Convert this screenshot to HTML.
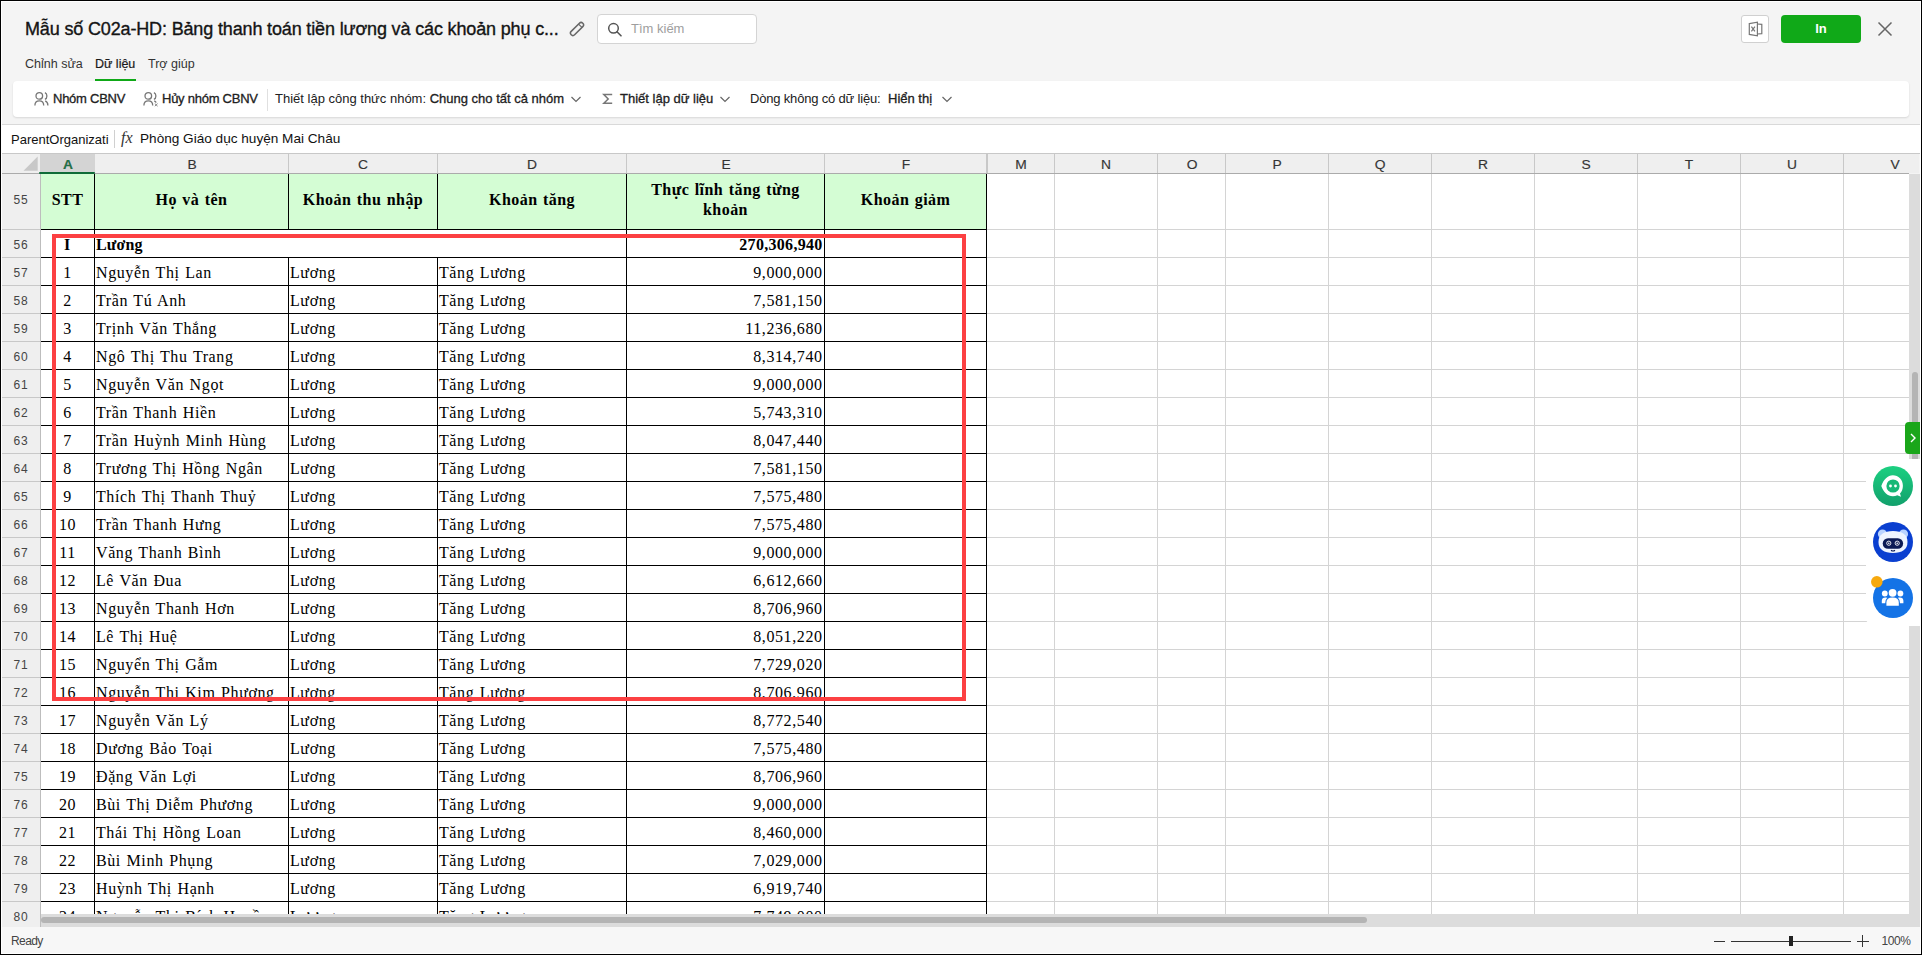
<!DOCTYPE html>
<html><head><meta charset="utf-8">
<style>
*{margin:0;padding:0;box-sizing:border-box}
html,body{width:1922px;height:955px;overflow:hidden;background:#000}
body{position:relative;font-family:"Liberation Sans",sans-serif;color:#212121}
.ab{position:absolute}
.t{position:absolute;white-space:nowrap;line-height:1}
.ser{font-family:"Liberation Serif",serif;color:#000;font-size:16px;letter-spacing:0.6px;word-spacing:1px}
.rn{position:absolute;left:1.9px;width:38px;text-align:center;font-size:12px;color:#444;line-height:1;letter-spacing:0.6px}
.ch{position:absolute;text-align:center;font-size:12px;color:#444;line-height:1;transform:scaleX(1.15);-webkit-text-stroke:0.15px #444}
</style></head><body>

<div class="ab" style="left:1px;top:1px;width:1920px;height:953px;background:#fff"></div>
<div class="ab" style="left:2px;top:2px;width:1918px;height:951px;background:#f4f4f4"></div>
<div class="t" style="left:25px;top:20px;font-size:18px;color:#141414;-webkit-text-stroke:0.35px #141414;letter-spacing:-0.15px">Mẫu số C02a-HD: Bảng thanh toán tiền lương và các khoản phụ c...</div>
<svg class="ab" style="left:569px;top:21px" width="16" height="16" viewBox="0 0 16 16"><g transform="rotate(45 8 8)"><rect x="5.6" y="-0.2" width="4.8" height="16.4" rx="2.4" fill="none" stroke="#666" stroke-width="1.5"/><line x1="5.6" y1="3.4" x2="10.4" y2="3.4" stroke="#666" stroke-width="1.2"/></g></svg>
<div class="ab" style="left:597px;top:14px;width:160px;height:30px;background:#fff;border:1px solid #d4d4d4;border-radius:4px"></div>
<svg class="ab" style="left:607px;top:21.5px" width="16" height="15" viewBox="0 0 16 15"><circle cx="6.5" cy="6.3" r="4.8" fill="none" stroke="#555" stroke-width="1.5"/><path d="M10 9.8 L14 13.8" stroke="#555" stroke-width="1.6" stroke-linecap="round"/></svg>
<div class="t" style="left:631px;top:22px;font-size:13px;color:#9e9e9e">Tìm kiếm</div>
<div class="ab" style="left:1741px;top:15px;width:28px;height:28px;background:#fff;border:1px solid #d0d0d0;border-radius:3px"></div>
<svg class="ab" style="left:1748px;top:21px" width="16" height="16" viewBox="0 0 16 16"><path d="M1.3 2.6 L9.4 1.1 L9.4 14.9 L1.3 13.4 Z" fill="none" stroke="#777" stroke-width="1.2"/><path d="M9.4 3 L13.8 3.3 L13.8 12.7 L9.4 13" fill="none" stroke="#777" stroke-width="1.2"/><path d="M3.4 5.6 L6.9 10.4 M6.9 5.6 L3.4 10.4" stroke="#777" stroke-width="1.2"/></svg>
<div class="ab" style="left:1781px;top:15px;width:80px;height:28px;background:#10a918;border-radius:4px"></div>
<div class="t" style="left:1781px;top:22px;width:80px;text-align:center;font-size:13px;font-weight:bold;color:#fff">In</div>
<svg class="ab" style="left:1877px;top:21px" width="16" height="16" viewBox="0 0 16 16"><path d="M1.5 1.5 L14.5 14.5 M14.5 1.5 L1.5 14.5" stroke="#666" stroke-width="1.5"/></svg>
<div class="t" style="left:25px;top:58px;font-size:12.5px;color:#333">Chỉnh sửa</div>
<div class="t" style="left:95px;top:58px;font-size:12.5px;color:#1a1a1a;-webkit-text-stroke:0.2px #1a1a1a">Dữ liệu</div>
<div class="t" style="left:148px;top:58px;font-size:12.5px;color:#333">Trợ giúp</div>
<div class="ab" style="left:95px;top:79px;width:41px;height:2px;background:#10a918"></div>
<div class="ab" style="left:13px;top:81px;width:1896px;height:36px;background:#fff;border-radius:4px;box-shadow:0 1px 2px rgba(0,0,0,0.12)"></div>
<svg class="ab" style="left:34px;top:91px" width="16" height="16" viewBox="0 0 16 16"><circle cx="5.3" cy="4.9" r="3.3" fill="none" stroke="#777" stroke-width="1.3"/><path d="M0.9 14.4 Q0.9 9.8 5.3 9.8 Q9.7 9.8 9.7 14.4" fill="none" stroke="#777" stroke-width="1.3"/><path d="M10.9 1.6 Q12.9 2.4 12.9 5 Q12.9 7.6 10.9 8.4" fill="none" stroke="#777" stroke-width="1.3"/><path d="M11.2 9.9 Q13.9 11 13.9 14.4" fill="none" stroke="#777" stroke-width="1.3"/></svg>
<div class="t" style="left:53px;top:92px;font-size:13px;letter-spacing:-0.25px;color:#212121;-webkit-text-stroke:0.3px #212121">Nhóm CBNV</div>
<svg class="ab" style="left:143px;top:91px" width="16" height="16" viewBox="0 0 16 16"><circle cx="5.3" cy="4.9" r="3.3" fill="none" stroke="#777" stroke-width="1.3"/><path d="M0.9 14.4 Q0.9 9.8 5.3 9.8 Q9.7 9.8 9.7 14.4" fill="none" stroke="#777" stroke-width="1.3"/><path d="M10.9 1.6 Q12.9 2.4 12.9 5 Q12.9 7.6 10.9 8.4" fill="none" stroke="#777" stroke-width="1.3"/><path d="M11.2 9.9 Q12.6 10.5 13.2 11.6" fill="none" stroke="#777" stroke-width="1.2"/><path d="M11.8 12.6 L14.6 15.2 M14.6 12.6 L11.8 15.2" stroke="#888" stroke-width="1"/></svg>
<div class="t" style="left:162px;top:92px;font-size:13px;letter-spacing:-0.25px;color:#212121;-webkit-text-stroke:0.3px #212121">Hủy nhóm CBNV</div>
<div class="ab" style="left:267px;top:89px;width:1px;height:22px;background:#e0e0e0"></div>
<div class="t" style="left:275px;top:92px;font-size:13px;color:#212121">Thiết lập công thức nhóm: <span style="-webkit-text-stroke:0.3px #212121">Chung cho tất cả nhóm</span></div>
<svg class="ab" style="left:570px;top:93.5px" width="12" height="10" viewBox="0 0 12 10"><path d="M1.5 3 L6 7.5 L10.5 3" fill="none" stroke="#666" stroke-width="1.2"/></svg>
<svg class="ab" style="left:602px;top:92px" width="12" height="14" viewBox="0 0 12 14"><path d="M10.2 2.6 L1.8 2.6 L6.2 7 L1.8 11.2 L10.2 11.2" fill="none" stroke="#777" stroke-width="1.5" stroke-linejoin="miter"/></svg>
<div class="t" style="left:620px;top:92px;font-size:13px;color:#212121;-webkit-text-stroke:0.3px #212121">Thiết lập dữ liệu</div>
<svg class="ab" style="left:719px;top:93.5px" width="12" height="10" viewBox="0 0 12 10"><path d="M1.5 3 L6 7.5 L10.5 3" fill="none" stroke="#666" stroke-width="1.2"/></svg>
<div class="t" style="left:750px;top:92px;font-size:13px;letter-spacing:-0.18px;color:#212121">Dòng không có dữ liệu:</div>
<div class="t" style="left:888px;top:92px;font-size:13px;color:#212121;-webkit-text-stroke:0.3px #212121">Hiển thị</div>
<svg class="ab" style="left:941px;top:93.5px" width="12" height="10" viewBox="0 0 12 10"><path d="M1.5 3 L6 7.5 L10.5 3" fill="none" stroke="#666" stroke-width="1.2"/></svg>
<div class="ab" style="left:2px;top:124px;width:1918px;height:1px;background:#d9d9d9"></div>
<div class="ab" style="left:2px;top:125px;width:1918px;height:28px;background:#fff"></div>
<div class="t" style="left:11px;top:133px;font-size:13px;color:#111">ParentOrganizati</div>
<div class="ab" style="left:114px;top:130px;width:1px;height:18px;background:#d0d0d0"></div>
<div class="t" style="left:121px;top:130px;font-family:'Liberation Serif',serif;font-style:italic;font-size:16px;color:#333">fx</div>
<div class="t" style="left:140px;top:132px;font-size:13.6px;color:#111">Phòng Giáo dục huyện Mai Châu</div>
<div class="ab" style="left:2px;top:153px;width:1918px;height:1px;background:#c8c8c8"></div>
<div class="ab" style="left:2px;top:154px;width:1917px;height:19px;background:#efefef"></div>
<svg class="ab" style="left:23px;top:156px" width="15" height="15" viewBox="0 0 15 15"><path d="M0.5 14.7 L14.7 0.5 L14.7 14.7 Z" fill="#c8c8c8"/></svg>
<div class="ab" style="left:40px;top:154px;width:55px;height:19px;background:#d4d4d4"></div>
<div class="ab" style="left:41px;top:174px;width:1868px;height:740px;background:#fff"></div>
<div class="ab" style="left:2px;top:173px;width:38px;height:754px;background:#efefef"></div>
<div class="ch" style="left:37.5px;top:159px;width:60px;color:#217346;font-weight:bold">A</div>
<div class="ab" style="left:288px;top:154px;width:1px;height:19px;background:#c8c8c8"></div>
<div class="ch" style="left:161.5px;top:159px;width:60px;color:#333;font-weight:normal">B</div>
<div class="ab" style="left:437px;top:154px;width:1px;height:19px;background:#c8c8c8"></div>
<div class="ch" style="left:333.0px;top:159px;width:60px;color:#333;font-weight:normal">C</div>
<div class="ab" style="left:626px;top:154px;width:1px;height:19px;background:#c8c8c8"></div>
<div class="ch" style="left:502.0px;top:159px;width:60px;color:#333;font-weight:normal">D</div>
<div class="ab" style="left:824px;top:154px;width:1px;height:19px;background:#c8c8c8"></div>
<div class="ch" style="left:695.5px;top:159px;width:60px;color:#333;font-weight:normal">E</div>
<div class="ab" style="left:986px;top:154px;width:1px;height:19px;background:#c8c8c8"></div>
<div class="ch" style="left:875.5px;top:159px;width:60px;color:#333;font-weight:normal">F</div>
<div class="ab" style="left:1054px;top:154px;width:1px;height:19px;background:#c8c8c8"></div>
<div class="ch" style="left:990.5px;top:159px;width:60px;color:#333;font-weight:normal">M</div>
<div class="ab" style="left:1157px;top:154px;width:1px;height:19px;background:#c8c8c8"></div>
<div class="ch" style="left:1076.0px;top:159px;width:60px;color:#333;font-weight:normal">N</div>
<div class="ab" style="left:1225px;top:154px;width:1px;height:19px;background:#c8c8c8"></div>
<div class="ch" style="left:1161.5px;top:159px;width:60px;color:#333;font-weight:normal">O</div>
<div class="ab" style="left:1328px;top:154px;width:1px;height:19px;background:#c8c8c8"></div>
<div class="ch" style="left:1247.0px;top:159px;width:60px;color:#333;font-weight:normal">P</div>
<div class="ab" style="left:1431px;top:154px;width:1px;height:19px;background:#c8c8c8"></div>
<div class="ch" style="left:1350.0px;top:159px;width:60px;color:#333;font-weight:normal">Q</div>
<div class="ab" style="left:1534px;top:154px;width:1px;height:19px;background:#c8c8c8"></div>
<div class="ch" style="left:1453.0px;top:159px;width:60px;color:#333;font-weight:normal">R</div>
<div class="ab" style="left:1637px;top:154px;width:1px;height:19px;background:#c8c8c8"></div>
<div class="ch" style="left:1556.0px;top:159px;width:60px;color:#333;font-weight:normal">S</div>
<div class="ab" style="left:1740px;top:154px;width:1px;height:19px;background:#c8c8c8"></div>
<div class="ch" style="left:1659.0px;top:159px;width:60px;color:#333;font-weight:normal">T</div>
<div class="ab" style="left:1843px;top:154px;width:1px;height:19px;background:#c8c8c8"></div>
<div class="ch" style="left:1762.0px;top:159px;width:60px;color:#333;font-weight:normal">U</div>
<div class="ch" style="left:1865.0px;top:159px;width:60px;color:#333;font-weight:normal">V</div>
<div class="ab" style="left:986px;top:154px;width:2px;height:19px;background:#c8c8c8"></div>
<div class="ab" style="left:2px;top:173px;width:1907px;height:1px;background:#ababab"></div>
<div class="ab" style="left:40px;top:174px;width:1px;height:753px;background:#bdbdbd"></div>
<div class="ab" style="left:39px;top:172px;width:56px;height:2px;background:#0f6b38;border-radius:1px"></div>
<div class="ab" style="left:986px;top:229px;width:923px;height:1px;background:#d4d4d4"></div>
<div class="ab" style="left:2px;top:229px;width:38px;height:1px;background:#c8c8c8"></div>
<div class="ab" style="left:986px;top:257px;width:923px;height:1px;background:#d4d4d4"></div>
<div class="ab" style="left:2px;top:257px;width:38px;height:1px;background:#c8c8c8"></div>
<div class="ab" style="left:986px;top:285px;width:923px;height:1px;background:#d4d4d4"></div>
<div class="ab" style="left:2px;top:285px;width:38px;height:1px;background:#c8c8c8"></div>
<div class="ab" style="left:986px;top:313px;width:923px;height:1px;background:#d4d4d4"></div>
<div class="ab" style="left:2px;top:313px;width:38px;height:1px;background:#c8c8c8"></div>
<div class="ab" style="left:986px;top:341px;width:923px;height:1px;background:#d4d4d4"></div>
<div class="ab" style="left:2px;top:341px;width:38px;height:1px;background:#c8c8c8"></div>
<div class="ab" style="left:986px;top:369px;width:923px;height:1px;background:#d4d4d4"></div>
<div class="ab" style="left:2px;top:369px;width:38px;height:1px;background:#c8c8c8"></div>
<div class="ab" style="left:986px;top:397px;width:923px;height:1px;background:#d4d4d4"></div>
<div class="ab" style="left:2px;top:397px;width:38px;height:1px;background:#c8c8c8"></div>
<div class="ab" style="left:986px;top:425px;width:923px;height:1px;background:#d4d4d4"></div>
<div class="ab" style="left:2px;top:425px;width:38px;height:1px;background:#c8c8c8"></div>
<div class="ab" style="left:986px;top:453px;width:923px;height:1px;background:#d4d4d4"></div>
<div class="ab" style="left:2px;top:453px;width:38px;height:1px;background:#c8c8c8"></div>
<div class="ab" style="left:986px;top:481px;width:923px;height:1px;background:#d4d4d4"></div>
<div class="ab" style="left:2px;top:481px;width:38px;height:1px;background:#c8c8c8"></div>
<div class="ab" style="left:986px;top:509px;width:923px;height:1px;background:#d4d4d4"></div>
<div class="ab" style="left:2px;top:509px;width:38px;height:1px;background:#c8c8c8"></div>
<div class="ab" style="left:986px;top:537px;width:923px;height:1px;background:#d4d4d4"></div>
<div class="ab" style="left:2px;top:537px;width:38px;height:1px;background:#c8c8c8"></div>
<div class="ab" style="left:986px;top:565px;width:923px;height:1px;background:#d4d4d4"></div>
<div class="ab" style="left:2px;top:565px;width:38px;height:1px;background:#c8c8c8"></div>
<div class="ab" style="left:986px;top:593px;width:923px;height:1px;background:#d4d4d4"></div>
<div class="ab" style="left:2px;top:593px;width:38px;height:1px;background:#c8c8c8"></div>
<div class="ab" style="left:986px;top:621px;width:923px;height:1px;background:#d4d4d4"></div>
<div class="ab" style="left:2px;top:621px;width:38px;height:1px;background:#c8c8c8"></div>
<div class="ab" style="left:986px;top:649px;width:923px;height:1px;background:#d4d4d4"></div>
<div class="ab" style="left:2px;top:649px;width:38px;height:1px;background:#c8c8c8"></div>
<div class="ab" style="left:986px;top:677px;width:923px;height:1px;background:#d4d4d4"></div>
<div class="ab" style="left:2px;top:677px;width:38px;height:1px;background:#c8c8c8"></div>
<div class="ab" style="left:986px;top:705px;width:923px;height:1px;background:#d4d4d4"></div>
<div class="ab" style="left:2px;top:705px;width:38px;height:1px;background:#c8c8c8"></div>
<div class="ab" style="left:986px;top:733px;width:923px;height:1px;background:#d4d4d4"></div>
<div class="ab" style="left:2px;top:733px;width:38px;height:1px;background:#c8c8c8"></div>
<div class="ab" style="left:986px;top:761px;width:923px;height:1px;background:#d4d4d4"></div>
<div class="ab" style="left:2px;top:761px;width:38px;height:1px;background:#c8c8c8"></div>
<div class="ab" style="left:986px;top:789px;width:923px;height:1px;background:#d4d4d4"></div>
<div class="ab" style="left:2px;top:789px;width:38px;height:1px;background:#c8c8c8"></div>
<div class="ab" style="left:986px;top:817px;width:923px;height:1px;background:#d4d4d4"></div>
<div class="ab" style="left:2px;top:817px;width:38px;height:1px;background:#c8c8c8"></div>
<div class="ab" style="left:986px;top:845px;width:923px;height:1px;background:#d4d4d4"></div>
<div class="ab" style="left:2px;top:845px;width:38px;height:1px;background:#c8c8c8"></div>
<div class="ab" style="left:986px;top:873px;width:923px;height:1px;background:#d4d4d4"></div>
<div class="ab" style="left:2px;top:873px;width:38px;height:1px;background:#c8c8c8"></div>
<div class="ab" style="left:986px;top:901px;width:923px;height:1px;background:#d4d4d4"></div>
<div class="ab" style="left:2px;top:901px;width:38px;height:1px;background:#c8c8c8"></div>
<div class="ab" style="left:1054px;top:174px;width:1px;height:740px;background:#d4d4d4"></div>
<div class="ab" style="left:1157px;top:174px;width:1px;height:740px;background:#d4d4d4"></div>
<div class="ab" style="left:1225px;top:174px;width:1px;height:740px;background:#d4d4d4"></div>
<div class="ab" style="left:1328px;top:174px;width:1px;height:740px;background:#d4d4d4"></div>
<div class="ab" style="left:1431px;top:174px;width:1px;height:740px;background:#d4d4d4"></div>
<div class="ab" style="left:1534px;top:174px;width:1px;height:740px;background:#d4d4d4"></div>
<div class="ab" style="left:1637px;top:174px;width:1px;height:740px;background:#d4d4d4"></div>
<div class="ab" style="left:1740px;top:174px;width:1px;height:740px;background:#d4d4d4"></div>
<div class="ab" style="left:1843px;top:174px;width:1px;height:740px;background:#d4d4d4"></div>
<div class="ab" style="left:41px;top:174px;width:945px;height:55px;background:#d4fdd4"></div>
<div class="ab" style="left:94px;top:174px;width:1px;height:740px;background:#000"></div>
<div class="ab" style="left:288px;top:174px;width:1px;height:55px;background:#000"></div>
<div class="ab" style="left:288px;top:257px;width:1px;height:657px;background:#000"></div>
<div class="ab" style="left:437px;top:174px;width:1px;height:55px;background:#000"></div>
<div class="ab" style="left:437px;top:257px;width:1px;height:657px;background:#000"></div>
<div class="ab" style="left:626px;top:174px;width:1px;height:740px;background:#000"></div>
<div class="ab" style="left:824px;top:174px;width:1px;height:740px;background:#000"></div>
<div class="ab" style="left:986px;top:174px;width:1px;height:740px;background:#000"></div>
<div class="ab" style="left:41px;top:229px;width:946px;height:1px;background:#000"></div>
<div class="ab" style="left:41px;top:257px;width:946px;height:1px;background:#000"></div>
<div class="ab" style="left:41px;top:285px;width:946px;height:1px;background:#000"></div>
<div class="ab" style="left:41px;top:313px;width:946px;height:1px;background:#000"></div>
<div class="ab" style="left:41px;top:341px;width:946px;height:1px;background:#000"></div>
<div class="ab" style="left:41px;top:369px;width:946px;height:1px;background:#000"></div>
<div class="ab" style="left:41px;top:397px;width:946px;height:1px;background:#000"></div>
<div class="ab" style="left:41px;top:425px;width:946px;height:1px;background:#000"></div>
<div class="ab" style="left:41px;top:453px;width:946px;height:1px;background:#000"></div>
<div class="ab" style="left:41px;top:481px;width:946px;height:1px;background:#000"></div>
<div class="ab" style="left:41px;top:509px;width:946px;height:1px;background:#000"></div>
<div class="ab" style="left:41px;top:537px;width:946px;height:1px;background:#000"></div>
<div class="ab" style="left:41px;top:565px;width:946px;height:1px;background:#000"></div>
<div class="ab" style="left:41px;top:593px;width:946px;height:1px;background:#000"></div>
<div class="ab" style="left:41px;top:621px;width:946px;height:1px;background:#000"></div>
<div class="ab" style="left:41px;top:649px;width:946px;height:1px;background:#000"></div>
<div class="ab" style="left:41px;top:677px;width:946px;height:1px;background:#000"></div>
<div class="ab" style="left:41px;top:705px;width:946px;height:1px;background:#000"></div>
<div class="ab" style="left:41px;top:733px;width:946px;height:1px;background:#000"></div>
<div class="ab" style="left:41px;top:761px;width:946px;height:1px;background:#000"></div>
<div class="ab" style="left:41px;top:789px;width:946px;height:1px;background:#000"></div>
<div class="ab" style="left:41px;top:817px;width:946px;height:1px;background:#000"></div>
<div class="ab" style="left:41px;top:845px;width:946px;height:1px;background:#000"></div>
<div class="ab" style="left:41px;top:873px;width:946px;height:1px;background:#000"></div>
<div class="ab" style="left:41px;top:901px;width:946px;height:1px;background:#000"></div>
<div class="t ser" style="left:41px;top:192px;width:53px;text-align:center;font-weight:bold;letter-spacing:0.45px;word-spacing:1px">STT</div>
<div class="t ser" style="left:95px;top:192px;width:193px;text-align:center;font-weight:bold;letter-spacing:0.45px;word-spacing:1px">Họ và tên</div>
<div class="t ser" style="left:289px;top:192px;width:148px;text-align:center;font-weight:bold;letter-spacing:0.45px;word-spacing:1px">Khoản thu nhập</div>
<div class="t ser" style="left:438px;top:192px;width:188px;text-align:center;font-weight:bold;letter-spacing:0.45px;word-spacing:1px">Khoản tăng</div>
<div class="t ser" style="left:627px;top:180px;width:197px;text-align:center;font-weight:bold;letter-spacing:0.45px;word-spacing:1px;line-height:19.5px">Thực lĩnh tăng từng<br>khoản</div>
<div class="t ser" style="left:825px;top:192px;width:161px;text-align:center;font-weight:bold;letter-spacing:0.45px;word-spacing:1px">Khoản giảm</div>
<div class="rn" style="top:194px">55</div>
<div class="rn" style="top:239px">56</div>
<div class="rn" style="top:267px">57</div>
<div class="rn" style="top:295px">58</div>
<div class="rn" style="top:323px">59</div>
<div class="rn" style="top:351px">60</div>
<div class="rn" style="top:379px">61</div>
<div class="rn" style="top:407px">62</div>
<div class="rn" style="top:435px">63</div>
<div class="rn" style="top:463px">64</div>
<div class="rn" style="top:491px">65</div>
<div class="rn" style="top:519px">66</div>
<div class="rn" style="top:547px">67</div>
<div class="rn" style="top:575px">68</div>
<div class="rn" style="top:603px">69</div>
<div class="rn" style="top:631px">70</div>
<div class="rn" style="top:659px">71</div>
<div class="rn" style="top:687px">72</div>
<div class="rn" style="top:715px">73</div>
<div class="rn" style="top:743px">74</div>
<div class="rn" style="top:771px">75</div>
<div class="rn" style="top:799px">76</div>
<div class="rn" style="top:827px">77</div>
<div class="rn" style="top:855px">78</div>
<div class="rn" style="top:883px">79</div>
<div class="rn" style="top:911px">80</div>
<div class="ab" style="left:41px;top:174px;width:1868px;height:740px;overflow:hidden">
<div class="t ser" style="left:0px;top:63px;width:53px;text-align:center;font-weight:bold">I</div>
<div class="t ser" style="left:55px;top:63px;font-weight:bold;letter-spacing:0.1px">Lương</div>
<div class="t ser" style="left:586px;top:63px;width:195.6px;text-align:right;font-weight:bold;letter-spacing:0.3px">270,306,940</div>
<div class="t ser" style="left:0px;top:91px;width:53px;text-align:center">1</div>
<div class="t ser" style="left:55px;top:91px;">Nguyễn Thị Lan</div>
<div class="t ser" style="left:249px;top:91px;">Lương</div>
<div class="t ser" style="left:398px;top:91px;">Tăng Lương</div>
<div class="t ser" style="left:586px;top:91px;width:195.6px;text-align:right">9,000,000</div>
<div class="t ser" style="left:0px;top:119px;width:53px;text-align:center">2</div>
<div class="t ser" style="left:55px;top:119px;">Trần Tú Anh</div>
<div class="t ser" style="left:249px;top:119px;">Lương</div>
<div class="t ser" style="left:398px;top:119px;">Tăng Lương</div>
<div class="t ser" style="left:586px;top:119px;width:195.6px;text-align:right">7,581,150</div>
<div class="t ser" style="left:0px;top:147px;width:53px;text-align:center">3</div>
<div class="t ser" style="left:55px;top:147px;">Trịnh Văn Thắng</div>
<div class="t ser" style="left:249px;top:147px;">Lương</div>
<div class="t ser" style="left:398px;top:147px;">Tăng Lương</div>
<div class="t ser" style="left:586px;top:147px;width:195.6px;text-align:right">11,236,680</div>
<div class="t ser" style="left:0px;top:175px;width:53px;text-align:center">4</div>
<div class="t ser" style="left:55px;top:175px;">Ngô Thị Thu Trang</div>
<div class="t ser" style="left:249px;top:175px;">Lương</div>
<div class="t ser" style="left:398px;top:175px;">Tăng Lương</div>
<div class="t ser" style="left:586px;top:175px;width:195.6px;text-align:right">8,314,740</div>
<div class="t ser" style="left:0px;top:203px;width:53px;text-align:center">5</div>
<div class="t ser" style="left:55px;top:203px;">Nguyễn Văn Ngọt</div>
<div class="t ser" style="left:249px;top:203px;">Lương</div>
<div class="t ser" style="left:398px;top:203px;">Tăng Lương</div>
<div class="t ser" style="left:586px;top:203px;width:195.6px;text-align:right">9,000,000</div>
<div class="t ser" style="left:0px;top:231px;width:53px;text-align:center">6</div>
<div class="t ser" style="left:55px;top:231px;">Trần Thanh Hiền</div>
<div class="t ser" style="left:249px;top:231px;">Lương</div>
<div class="t ser" style="left:398px;top:231px;">Tăng Lương</div>
<div class="t ser" style="left:586px;top:231px;width:195.6px;text-align:right">5,743,310</div>
<div class="t ser" style="left:0px;top:259px;width:53px;text-align:center">7</div>
<div class="t ser" style="left:55px;top:259px;">Trần Huỳnh Minh Hùng</div>
<div class="t ser" style="left:249px;top:259px;">Lương</div>
<div class="t ser" style="left:398px;top:259px;">Tăng Lương</div>
<div class="t ser" style="left:586px;top:259px;width:195.6px;text-align:right">8,047,440</div>
<div class="t ser" style="left:0px;top:287px;width:53px;text-align:center">8</div>
<div class="t ser" style="left:55px;top:287px;">Trương Thị Hồng Ngân</div>
<div class="t ser" style="left:249px;top:287px;">Lương</div>
<div class="t ser" style="left:398px;top:287px;">Tăng Lương</div>
<div class="t ser" style="left:586px;top:287px;width:195.6px;text-align:right">7,581,150</div>
<div class="t ser" style="left:0px;top:315px;width:53px;text-align:center">9</div>
<div class="t ser" style="left:55px;top:315px;">Thích Thị Thanh Thuỷ</div>
<div class="t ser" style="left:249px;top:315px;">Lương</div>
<div class="t ser" style="left:398px;top:315px;">Tăng Lương</div>
<div class="t ser" style="left:586px;top:315px;width:195.6px;text-align:right">7,575,480</div>
<div class="t ser" style="left:0px;top:343px;width:53px;text-align:center">10</div>
<div class="t ser" style="left:55px;top:343px;">Trần Thanh Hưng</div>
<div class="t ser" style="left:249px;top:343px;">Lương</div>
<div class="t ser" style="left:398px;top:343px;">Tăng Lương</div>
<div class="t ser" style="left:586px;top:343px;width:195.6px;text-align:right">7,575,480</div>
<div class="t ser" style="left:0px;top:371px;width:53px;text-align:center">11</div>
<div class="t ser" style="left:55px;top:371px;">Văng Thanh Bình</div>
<div class="t ser" style="left:249px;top:371px;">Lương</div>
<div class="t ser" style="left:398px;top:371px;">Tăng Lương</div>
<div class="t ser" style="left:586px;top:371px;width:195.6px;text-align:right">9,000,000</div>
<div class="t ser" style="left:0px;top:399px;width:53px;text-align:center">12</div>
<div class="t ser" style="left:55px;top:399px;">Lê Văn Đua</div>
<div class="t ser" style="left:249px;top:399px;">Lương</div>
<div class="t ser" style="left:398px;top:399px;">Tăng Lương</div>
<div class="t ser" style="left:586px;top:399px;width:195.6px;text-align:right">6,612,660</div>
<div class="t ser" style="left:0px;top:427px;width:53px;text-align:center">13</div>
<div class="t ser" style="left:55px;top:427px;">Nguyễn Thanh Hơn</div>
<div class="t ser" style="left:249px;top:427px;">Lương</div>
<div class="t ser" style="left:398px;top:427px;">Tăng Lương</div>
<div class="t ser" style="left:586px;top:427px;width:195.6px;text-align:right">8,706,960</div>
<div class="t ser" style="left:0px;top:455px;width:53px;text-align:center">14</div>
<div class="t ser" style="left:55px;top:455px;">Lê Thị Huệ</div>
<div class="t ser" style="left:249px;top:455px;">Lương</div>
<div class="t ser" style="left:398px;top:455px;">Tăng Lương</div>
<div class="t ser" style="left:586px;top:455px;width:195.6px;text-align:right">8,051,220</div>
<div class="t ser" style="left:0px;top:483px;width:53px;text-align:center">15</div>
<div class="t ser" style="left:55px;top:483px;">Nguyển Thị Gẫm</div>
<div class="t ser" style="left:249px;top:483px;">Lương</div>
<div class="t ser" style="left:398px;top:483px;">Tăng Lương</div>
<div class="t ser" style="left:586px;top:483px;width:195.6px;text-align:right">7,729,020</div>
<div class="t ser" style="left:0px;top:511px;width:53px;text-align:center">16</div>
<div class="t ser" style="left:55px;top:511px;">Nguyễn Thị Kim Phương</div>
<div class="t ser" style="left:249px;top:511px;">Lương</div>
<div class="t ser" style="left:398px;top:511px;">Tăng Lương</div>
<div class="t ser" style="left:586px;top:511px;width:195.6px;text-align:right">8,706,960</div>
<div class="t ser" style="left:0px;top:539px;width:53px;text-align:center">17</div>
<div class="t ser" style="left:55px;top:539px;">Nguyễn Văn Lý</div>
<div class="t ser" style="left:249px;top:539px;">Lương</div>
<div class="t ser" style="left:398px;top:539px;">Tăng Lương</div>
<div class="t ser" style="left:586px;top:539px;width:195.6px;text-align:right">8,772,540</div>
<div class="t ser" style="left:0px;top:567px;width:53px;text-align:center">18</div>
<div class="t ser" style="left:55px;top:567px;">Dương Bảo Toại</div>
<div class="t ser" style="left:249px;top:567px;">Lương</div>
<div class="t ser" style="left:398px;top:567px;">Tăng Lương</div>
<div class="t ser" style="left:586px;top:567px;width:195.6px;text-align:right">7,575,480</div>
<div class="t ser" style="left:0px;top:595px;width:53px;text-align:center">19</div>
<div class="t ser" style="left:55px;top:595px;">Đặng Văn Lợi</div>
<div class="t ser" style="left:249px;top:595px;">Lương</div>
<div class="t ser" style="left:398px;top:595px;">Tăng Lương</div>
<div class="t ser" style="left:586px;top:595px;width:195.6px;text-align:right">8,706,960</div>
<div class="t ser" style="left:0px;top:623px;width:53px;text-align:center">20</div>
<div class="t ser" style="left:55px;top:623px;">Bùi Thị Diễm Phương</div>
<div class="t ser" style="left:249px;top:623px;">Lương</div>
<div class="t ser" style="left:398px;top:623px;">Tăng Lương</div>
<div class="t ser" style="left:586px;top:623px;width:195.6px;text-align:right">9,000,000</div>
<div class="t ser" style="left:0px;top:651px;width:53px;text-align:center">21</div>
<div class="t ser" style="left:55px;top:651px;">Thái Thị Hồng Loan</div>
<div class="t ser" style="left:249px;top:651px;">Lương</div>
<div class="t ser" style="left:398px;top:651px;">Tăng Lương</div>
<div class="t ser" style="left:586px;top:651px;width:195.6px;text-align:right">8,460,000</div>
<div class="t ser" style="left:0px;top:679px;width:53px;text-align:center">22</div>
<div class="t ser" style="left:55px;top:679px;">Bùi Minh Phụng</div>
<div class="t ser" style="left:249px;top:679px;">Lương</div>
<div class="t ser" style="left:398px;top:679px;">Tăng Lương</div>
<div class="t ser" style="left:586px;top:679px;width:195.6px;text-align:right">7,029,000</div>
<div class="t ser" style="left:0px;top:707px;width:53px;text-align:center">23</div>
<div class="t ser" style="left:55px;top:707px;">Huỳnh Thị Hạnh</div>
<div class="t ser" style="left:249px;top:707px;">Lương</div>
<div class="t ser" style="left:398px;top:707px;">Tăng Lương</div>
<div class="t ser" style="left:586px;top:707px;width:195.6px;text-align:right">6,919,740</div>
<div class="t ser" style="left:0px;top:735px;width:53px;text-align:center">24</div>
<div class="t ser" style="left:55px;top:735px;">Nguyễn Thị Bích Huyền</div>
<div class="t ser" style="left:249px;top:735px;">Lương</div>
<div class="t ser" style="left:398px;top:735px;">Tăng Lương</div>
<div class="t ser" style="left:586px;top:735px;width:195.6px;text-align:right">7,749,000</div>
</div>
<div class="ab" style="left:52px;top:234px;width:914px;height:467px;border:4px solid #fc4042"></div>
<div class="ab" style="left:41px;top:914px;width:1868px;height:13px;background:#dcdcdc"></div>
<div class="ab" style="left:41px;top:917px;width:1326px;height:6px;background:#b4b4b4;border-radius:3px"></div>
<div class="ab" style="left:1909px;top:174px;width:11px;height:753px;background:#dcdcdc"></div>
<div class="ab" style="left:1912px;top:372px;width:6px;height:110px;background:#b4b4b4;border-radius:3px"></div>
<div class="ab" style="left:2px;top:927px;width:1918px;height:26px;background:#f7f7f7"></div>
<div class="t" style="left:11px;top:935px;font-size:12px;letter-spacing:-0.6px;color:#444">Ready</div>
<div class="ab" style="left:1714px;top:941px;width:11px;height:1px;background:#333"></div>
<div class="ab" style="left:1731px;top:941px;width:120px;height:1px;background:#333"></div>
<div class="ab" style="left:1789px;top:936px;width:4px;height:10px;background:#222"></div>
<div class="ab" style="left:1857px;top:941px;width:12px;height:1px;background:#333"></div>
<div class="ab" style="left:1862px;top:935px;width:1px;height:12px;background:#333"></div>
<div class="t" style="left:1881.5px;top:935px;font-size:12px;letter-spacing:-0.45px;color:#444">100%</div>
<div class="ab" style="left:1905px;top:422px;width:15px;height:32px;background:#1aa61a;border-radius:4px 0 0 4px"></div>
<svg class="ab" style="left:1908px;top:432px" width="10" height="12" viewBox="0 0 10 12"><path d="M3 2 L7 6 L3 10" fill="none" stroke="#fff" stroke-width="1.4"/></svg>
<div class="ab" style="left:1866px;top:459px;width:54px;height:167px;background:#fff;border-radius:8px 0 0 8px"></div>
<svg class="ab" style="left:1872px;top:465px" width="42" height="42" viewBox="0 0 42 42"><defs><linearGradient id="g1" x1="0" y1="0" x2="0" y2="1"><stop offset="0" stop-color="#1cd081"/><stop offset="1" stop-color="#12a06c"/></linearGradient></defs><circle cx="21" cy="21" r="20" fill="url(#g1)"/><path d="M9.3 21 C11.5 14.5 15.8 10.3 20.8 10.3 C26.5 10.3 30.9 14.9 30.9 20.8 C30.9 24.2 29.8 26.6 28 28.4 L29 31.8 L25.3 30.3 C23.9 31 22.4 31.3 20.8 31.3 C15.8 31.3 11.5 27.3 9.3 21 Z" fill="#fff"/><circle cx="21" cy="21" r="6.6" fill="#17b877"/><circle cx="18.5" cy="21" r="1.4" fill="#fff"/><circle cx="23.5" cy="21" r="1.4" fill="#fff"/></svg>
<svg class="ab" style="left:1872px;top:521px" width="42" height="42" viewBox="0 0 42 42"><circle cx="21" cy="21" r="20" fill="#0a3fd0"/><circle cx="10.5" cy="13" r="4.6" fill="#b9d3ff"/><circle cx="31.5" cy="13" r="4.6" fill="#b9d3ff"/><path d="M6.5 21 C6.5 13.5 12 10 21 10 C30 10 35.5 13.5 35.5 21 C35.5 28.5 30 32 21 32 C12 32 6.5 28.5 6.5 21 Z" fill="#eef4ff"/><rect x="10.7" y="17.2" width="20.4" height="10.6" rx="5.3" fill="#0b1a55"/><circle cx="16.8" cy="22.2" r="2.1" fill="none" stroke="#fff" stroke-width="0.9"/><circle cx="25.2" cy="22.2" r="2.1" fill="none" stroke="#fff" stroke-width="0.9"/><circle cx="16.8" cy="22.2" r="0.8" fill="#fff"/><circle cx="25.2" cy="22.2" r="0.8" fill="#fff"/><path d="M19 29.3 Q21 30.8 23 29.3" fill="none" stroke="#0b1a55" stroke-width="1.1"/></svg>
<svg class="ab" style="left:1868px;top:573px" width="46" height="46" viewBox="0 0 46 46"><circle cx="25" cy="25" r="20" fill="#1473e6"/><circle cx="24.6" cy="19.8" r="3.9" fill="#fff"/><circle cx="16.8" cy="20.5" r="2.9" fill="#fff"/><circle cx="32.4" cy="20.5" r="2.9" fill="#fff"/><path d="M18.4 32.7 L18.4 29.5 Q18.4 24.6 24.6 24.6 Q30.8 24.6 30.8 29.5 L30.8 32.7 Z" fill="#fff"/><path d="M13.8 30.2 L13.8 27.8 Q13.8 24.4 17.5 24.4 Q18.6 24.4 19.3 24.8 Q17.4 26.3 17.2 30.2 Z" fill="#fff"/><path d="M35.4 30.2 L35.4 27.8 Q35.4 24.4 31.7 24.4 Q30.6 24.4 29.9 24.8 Q31.8 26.3 32 30.2 Z" fill="#fff"/><circle cx="8.8" cy="8.8" r="5.8" fill="#f7a90d"/></svg>
</body></html>
